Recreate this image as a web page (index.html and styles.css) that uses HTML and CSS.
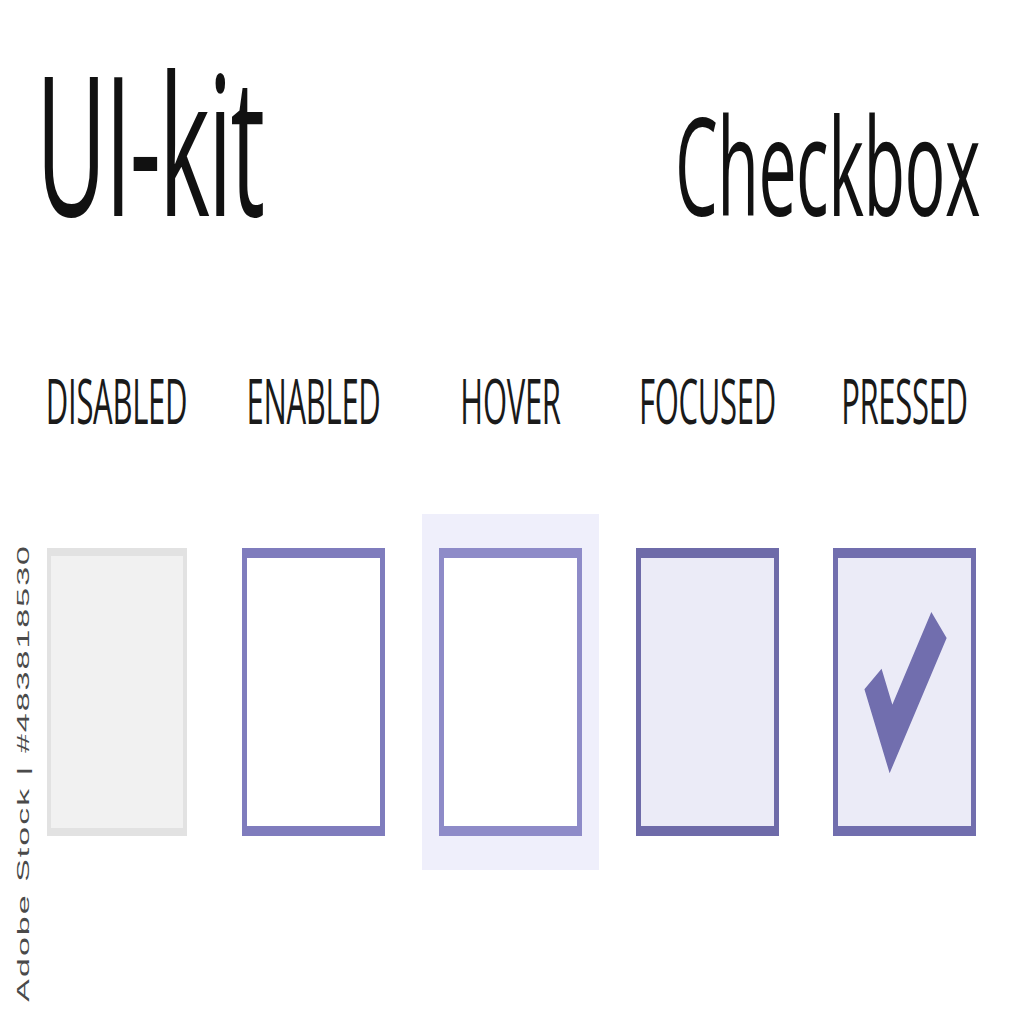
FILE: index.html
```html
<!DOCTYPE html>
<html lang="en">
<head>
    <meta charset="UTF-8">
    <meta name="viewport" content="width=device-width, initial-scale=1">
    <title>UI-kit Checkbox</title>
    <link rel="stylesheet" href="styles.css">
</head>
<body>
    <div class="stage">
        <header class="kit-header">
            <h1 class="kit-title">UI-kit</h1>
            <h2 class="kit-subtitle">Checkbox</h2>
        </header>

        <div class="states">
            <div class="state">
                <span class="state-label">DISABLED</span>
                <div class="box disabled"></div>
            </div>
            <div class="state">
                <span class="state-label">ENABLED</span>
                <div class="box enabled"></div>
            </div>
            <div class="state">
                <span class="state-label">HOVER</span>
                <div class="box hover"></div>
            </div>
            <div class="state">
                <span class="state-label">FOCUSED</span>
                <div class="box focused"></div>
            </div>
            <div class="state">
                <span class="state-label">PRESSED</span>
                <div class="box pressed">
                    <svg class="check" viewBox="0 0 133 133">
                        <polyline points="35,60 53,90 101,33" fill="none" stroke="#716eae" stroke-width="20" stroke-linejoin="miter" stroke-linecap="butt"/>
                    </svg>
                </div>
            </div>
        </div>

        <div class="watermark">Adobe Stock | #483818530</div>
    </div>
</body>
</html>
```

FILE: styles.css
```css
html, body {
    margin: 0;
    padding: 0;
    background-color: #ffffff;
}

body {
    height: 1024px;
    font-family: "Open Sans", "Liberation Sans", sans-serif;
    color: #111111;
}

/* the whole sheet is drawn at half height, then stretched */
.stage {
    position: relative;
    width: 1024px;
    height: 512px;
    transform: scaleY(2);
    transform-origin: top left;
}

.kit-header {
    display: flex;
    justify-content: space-between;
    align-items: baseline;
    padding: 22px 44px 0 36px;
}

.kit-title,
.kit-subtitle {
    margin: 0;
    font-weight: 400;
    line-height: 1;
}

.kit-title {
    font-size: 97px;
    letter-spacing: -2px;
}

.kit-subtitle {
    font-size: 68px;
    letter-spacing: -0.5px;
}

.states {
    display: grid;
    grid-template-columns: repeat(5, 143px);
    column-gap: 54px;
    padding: 0 0 0 45px;
    margin-top: 66px;
}

.state {
    display: flex;
    flex-direction: column;
    align-items: center;
}

.state-label {
    font-size: 31px;
    line-height: 1;
    letter-spacing: -0.3px;
    color: #1a1a1a;
    white-space: nowrap;
}

.box {
    box-sizing: border-box;
    width: 143px;
    height: 144px;
    margin-top: 58px;
    border: 5px solid #7f7cbd;
    background-color: #ffffff;
}

.box.disabled {
    border: 4px solid #e2e2e2;
    background-color: #f1f1f1;
    width: 140px;
}

.box.hover {
    border-color: #8e8bc8;
    box-shadow: 0 0 0 17px #efeffb;
}

.box.focused {
    border-color: #6e6ba9;
    background-color: #ebebf7;
}

.box.pressed {
    border-color: #716eae;
    background-color: #ebebf7;
}

.check {
    display: block;
    width: 133px;
    height: 134px;
}

.watermark {
    position: absolute;
    left: 14px;
    top: 272px;
    writing-mode: vertical-rl;
    transform: rotate(180deg);
    font-family: "Liberation Sans", Arial, sans-serif;
    font-size: 17px;
    letter-spacing: 1px;
    color: #4a4a4a;
    white-space: nowrap;
}
```
